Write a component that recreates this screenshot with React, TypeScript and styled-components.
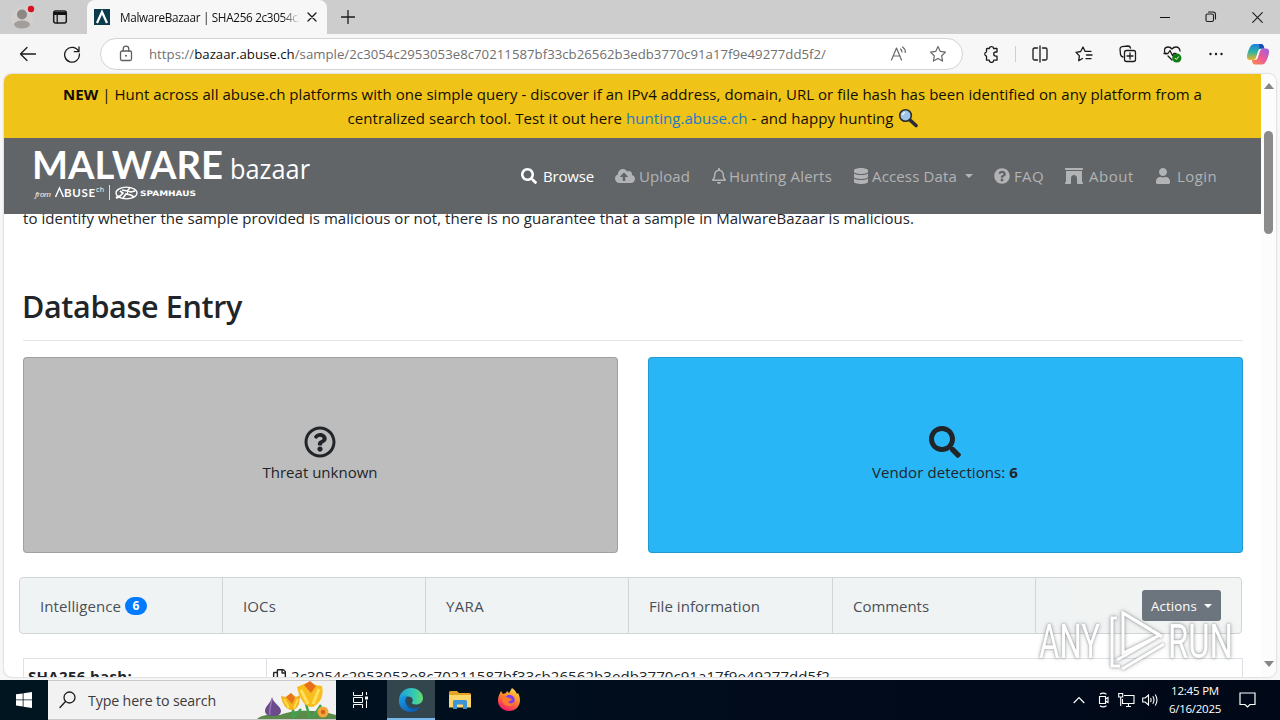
import React, {useLayoutEffect, useRef, useState} from 'react';
import styled, {createGlobalStyle, css} from 'styled-components';
import {
  FaArchway,
  FaCloudUploadAlt,
  FaDatabase,
  FaQuestionCircle,
  FaRegBell,
  FaRegCopy,
  FaRegQuestionCircle,
  FaSearch,
  FaUser,
} from 'react-icons/fa';

const GlobalStyle = createGlobalStyle`
  * {
    box-sizing: border-box;
  }
  body {
    margin: 0;
    overflow: hidden;
    font-family: "Open Sans", "Noto Sans", sans-serif;
    font-size: 15px;
    line-height: 24px;
    color: #212529;
  }
  svg {
    display: block;
    flex: none;
  }
`

const DesktopSC = styled.div`
  width: 1280px;
  height: 720px;
  display: flex;
  flex-direction: column;
  position: relative;
  overflow: hidden;
  background: #f7f7f7;
`

/* text */
const FitTextSC = styled.span`
  display: inline-block;
  white-space: pre;
`
type FitTextType = {
  width: number;
  children: React.ReactNode;
}
// spreads the letters so that the text takes the given width
const FitText = ({width, children}: FitTextType) => {
  const ref = useRef<HTMLSpanElement>(null)
  const [spacing, setSpacing] = useState(0)

  useLayoutEffect(() => {
    const el = ref.current
    if (!el || !el.textContent) return
    const natural = el.getBoundingClientRect().width
    setSpacing((width - natural) / el.textContent.length)
  }, [])

  return <FitTextSC ref={ref} style={{letterSpacing: spacing}}>{children}</FitTextSC>
}

const Spacer = styled.div<{ $width?: number }>`
  ${props => props.$width === undefined ? 'margin-left: auto;' : `margin-left: ${props.$width}px;`}
`

/* tab strip */
const TabStrip = styled.div`
  height: 34px;
  flex: none;
  display: flex;
  background: #cdcdcd;
`
const TabStripLeft = styled.div`
  width: 87px;
  display: flex;
  align-items: center;
  gap: 16px;
  padding-left: 9px;
`
const BrowserTab = styled.div`
  width: 240px;
  display: flex;
  align-items: center;
  padding-left: 7px;
  background: #f7f7f7;
  border-radius: 8px 8px 0 0;
`
const TabTitle = styled.div`
  width: 180px;
  margin: 0 7px 0 10px;
  overflow: hidden;
  font-size: 11.7px;
  line-height: 16px;
  color: #111;
  white-space: nowrap;
  mask-image: linear-gradient(90deg, #000 162px, transparent 180px);
`
const NewTab = styled.div`
  display: flex;
  align-items: center;
  padding-left: 14px;
`
const WindowButtons = styled.div`
  margin-left: auto;
  display: flex;
  align-items: center;
`
const WindowButton = styled.div`
  width: 46px;
  display: flex;
  justify-content: center;
`

/* toolbar */
const Toolbar = styled.div`
  height: 40px;
  flex: none;
  display: flex;
  align-items: center;
  background: #f7f7f7;
`
const NavButtons = styled.div`
  width: 100px;
  display: flex;
  align-items: center;
  gap: 24px;
  padding-left: 18px;
`
const AddressBar = styled.div`
  width: 863px;
  height: 32px;
  display: flex;
  align-items: center;
  padding: 0 15px 0 17px;
  background: #fff;
  border: 1px solid #d3d3d3;
  border-radius: 16px;
`
const Address = styled.div`
  margin-left: 15px;
  font-size: 13.2px;
  line-height: 20px;
  color: #707070;
  b {
    font-weight: 400;
    color: #111;
  }
`
const AddressIcons = styled.div`
  margin-left: auto;
  display: flex;
  align-items: center;
  gap: 21px;
`
const ToolbarIcons = styled.div`
  flex: 1;
  display: flex;
  align-items: center;
  gap: 26px;
  padding-left: 19px;
`
const ToolbarLine = styled.div`
  width: 1px;
  height: 16px;
  margin: 0 -11px 0 -12px;
  background: #cfcfcf;
`
const ToolbarEnd = styled.div`
  display: flex;
  align-items: center;
  gap: 23px;
  margin-left: -1px;
`

/* site */
const Viewport = styled.div`
  height: 603px;
  flex: none;
  margin: 0 4px;
  display: flex;
  overflow: hidden;
  background: #fff;
  border-radius: 8px;
  box-shadow: 0 0 2px rgba(0, 0, 0, 0.3);
`
const Site = styled.div`
  width: 1257px;
  display: flex;
  flex-direction: column;
`
const Banner = styled.div`
  height: 64px;
  flex: none;
  padding-top: 8px;
  display: flex;
  flex-direction: column;
  align-items: center;
  background: #efc318;
  color: #120e05;
  a {
    color: #2079cc;
  }
`
const BannerRow = styled.div`
  height: 24px;
  display: flex;
  align-items: center;
  gap: 4px;
`
const Header = styled.div`
  height: 76px;
  flex: none;
  display: flex;
  justify-content: space-between;
  background: #626568;
`
const Menu = styled.div`
  display: flex;
  align-items: center;
  padding-right: 44px;
  gap: 21px;
`
type MenuItemType = {
  $active?: boolean;
  $gap?: number;
}
const MenuItem = styled.a<MenuItemType>`
  display: flex;
  align-items: center;
  gap: ${props => props.$gap ?? 4}px;
  color: ${props => props.$active ? '#fff' : '#b1b3b5'};
`
const Caret = styled.i<{ $left?: number }>`
  margin-left: ${props => props.$left ?? 4}px;
  border: 4px solid transparent;
  border-top-color: currentColor;
  border-bottom: 0;
`
const Content = styled.div`
  flex: 1;
  padding: 0 18px 0 19px;
  overflow: hidden;
`
const Note = styled.p`
  height: 24px;
  margin: -8px 0 0;
`
const Title = styled.h2`
  height: 38px;
  margin: 57px 0 15px -1px;
  font-weight: 600;
  font-size: 30.5px;
  line-height: 38px;
`
const Line = styled.div`
  height: 1px;
  margin-top: 1px;
  background: #e4e4e4;
`
const Cards = styled.div`
  display: grid;
  grid-template-columns: 1fr 1fr;
  column-gap: 30px;
  margin-top: 16px;
`
const Card = styled.div<{ $color: string }>`
  height: 196px;
  display: flex;
  flex-direction: column;
  align-items: center;
  padding: 68px 1px 0 0;
  background: ${props => props.$color};
  border: 1px solid rgba(0, 0, 0, 0.15);
  border-radius: 4px;
`
const CardText = styled.div`
  margin-top: 2px;
  height: 24px;
`
const Sections = styled.div`
  width: 1223px;
  height: 57px;
  margin: 24px 0 24px -4px;
  display: grid;
  grid-template-columns: 202px 203px 203px 204px 203px 1fr;
  background: linear-gradient(90deg, #f0f3f3 83%, #f3f4f4);
  border: 1px solid #d2d5d6;
  border-radius: 4px;
`
const Section = styled.div`
  display: flex;
  align-items: center;
  gap: 4px;
  padding: 1px 20px 0 20px;
  color: #495057;
  & + & {
    border-left: 1px solid #d2d5d6;
  }
`
const Badge = styled.span`
  width: 22px;
  height: 18px;
  border-radius: 9px;
  background: #007bff;
  color: #fff;
  font-size: 12px;
  font-weight: 700;
  line-height: 18px;
  text-align: center;
`
const ActionsButton = styled.div`
  width: 79px;
  height: 31px;
  margin: -1px 0 0 auto;
  display: flex;
  align-items: center;
  justify-content: center;
  gap: 3px;
  border-radius: 3px;
  background: #6c757d;
  color: #fff;
  font-size: 13.2px;
`
const Table = styled.div`
  display: grid;
  grid-template-columns: 243px 1fr;
  border: 1px solid #dee2e6;
`
const Cell = styled.div<{ $head?: boolean }>`
  height: 34px;
  display: flex;
  align-items: center;
  gap: 4px;
  padding: 0 5px;
  ${props => props.$head && css`
    font-weight: 700;
    border-right: 1px solid #dee2e6;
    padding-left: 4px;
  `}
`
const ScrollBar = styled.div`
  width: 15px;
  display: flex;
  flex-direction: column;
  align-items: center;
  padding: 9px 0 10px;
  background: #fcfcfc;
`
const ScrollArrow = styled.div<{ $down?: boolean }>`
  border: 5px solid transparent;
  ${props => props.$down ? css`
    margin-top: auto;
    border-top: 6px solid #858585;
    border-bottom: 0;
  ` : css`
    border-bottom: 6px solid #858585;
    border-top: 0;
  `}
`
const ScrollThumb = styled.div`
  width: 9px;
  height: 103px;
  margin-top: 42px;
  border-radius: 5px;
  background: #8b8b8b;
`

/* taskbar */
const Taskbar = styled.div`
  height: 40px;
  flex: none;
  margin-top: 3px;
  display: flex;
  background: linear-gradient(90deg, #00151f, #010b1c 60%, #010918);
  color: #fff;
`
const TaskItem = styled.div<{ $active?: boolean }>`
  width: 48px;
  display: flex;
  align-items: center;
  justify-content: center;
  ${props => props.$active && css`
    background: #33454d;
    border-bottom: 2px solid #76b9ed;
    padding-top: 2px;
  `}
`
const SearchBox = styled.div`
  width: 288px;
  display: flex;
  align-items: center;
  background: #f2f2f2;
  border: solid #c9c9c9;
  border-width: 1px 0;
  padding-left: 11px;
  color: #3b3b3b;
  font-size: 14.2px;
`
const SearchText = styled.div`
  margin: 1px 0 0 12px;
`
const Tray = styled.div`
  margin-left: auto;
  display: flex;
  align-items: center;
  gap: 7px;
  padding-right: 24px;
`
const Clock = styled.div`
  width: 54px;
  display: flex;
  flex-direction: column;
  align-items: center;
  margin: 0 10px 0 2px;
  font-size: 11.5px;
  line-height: 18px;
`
const Watermark = styled.svg`
  position: absolute;
  left: 1032px;
  top: 600px;
  filter: drop-shadow(0 0 1px rgba(90, 95, 100, 0.5)) drop-shadow(0 0 2px rgba(90, 95, 100, 0.4));
`

const stroke = {fill: 'none', stroke: '#1b1b1b', strokeWidth: 1.3, strokeLinecap: 'round', strokeLinejoin: 'round'} as const

const starPath = 'M9 1.5l2.3 4.9 5.2.7-3.8 3.7.9 5.3L9 13.5l-4.6 2.6.9-5.3L1.5 7.1l5.2-.7z'

const Logo = () => (
  <svg width="330" height="76" viewBox="0 0 330 76" fill="#fff">
    <text x="28" y="41" fontFamily="Lato" fontWeight="700" fontSize="38" textLength="191" lengthAdjust="spacingAndGlyphs">MALWARE</text>
    <text x="226" y="41" fontFamily="Open Sans" fontSize="27" textLength="80" lengthAdjust="spacingAndGlyphs">bazaar</text>
    <text x="31" y="59" fontFamily="Open Sans" fontStyle="italic" fontSize="8" textLength="16">from</text>
    <path d="M51.500 59l4-9 4 9" fill="none" stroke="#fff" strokeWidth="1.500"/>
    <text x="60" y="59" fontFamily="Lato" fontWeight="700" fontSize="11.500" textLength="31">BUSE</text>
    <text x="92" y="54" fontFamily="Open Sans" fontSize="7" textLength="8">ch</text>
    <path d="M105.500 47v15" stroke="#dcdddd"/>
    <g fill="none" stroke="#fff">
      <ellipse cx="122.500" cy="55" rx="10.500" ry="5.800" strokeWidth="1.300"/>
      <path d="M115 59l4-4-3-2M119 60l3-4 5 1 3 2M118 52l5 1 3-3M123 53l4 1 4-1" strokeWidth="1.600"/>
      <path d="M123 55h1M112 60l4-2" strokeWidth="2.500"/>
    </g>
    <text x="136" y="58" fontFamily="DejaVu Sans" fontWeight="700" fontSize="7.500" textLength="56" lengthAdjust="spacingAndGlyphs">SPAMHAUS</text>
  </svg>
)

const Crocus = () => (
  <svg width="80" height="38" viewBox="0 0 80 38">
    <path d="M1 38c6-5 16-5 23-4 12-5 35-6 56 0v4z" fill="#5b8a4a"/>
    <path d="M37 37V26M54 37l-4-14M57 36l8-12M38 36l7-8" stroke="#3fa34d" strokeWidth="2.500" fill="none"/>
    <path d="M16 16c1 6 9 9 9 14 0 4-4 5-8 5-5 0-8-2-8-5 0-5 6-8 7-14z" fill="#6b4a8e"/>
    <path d="M16 18c-1 6-3 10-2 16" stroke="#9678b4" strokeWidth="1.500" fill="none"/>
    <path d="M25 15l5 1 5-4 5 4 4-2c0 9-2 14-8 15-6 0-10-7-11-14z" fill="#f6b21b"/>
    <path d="M30 16l5-4 4 5-3 6z" fill="#e8731d"/>
    <path d="M28 18l5 9M42 18l-4 9" stroke="#ffda48" strokeWidth="2.200"/>
    <path d="M41 6l7-3 5-2 6 3 7 1c2 9-1 17-9 21-8 1-14-9-16-20z" fill="#f9bd1d"/>
    <path d="M48 4l6-4 6 5-5 7z" fill="#e8701b"/>
    <path d="M45 9l7 14M63 8l-6 15" stroke="#ffe05a" strokeWidth="3"/>
    <circle cx="67" cy="31" r="5.500" fill="#f4a63a"/>
    <circle cx="67" cy="31" r="2.200" fill="#d2601a"/>
  </svg>
)

const EdgeIcon = () => (
  <svg width="26" height="26" viewBox="0 0 26 26">
    <defs>
      <linearGradient id="edgeTop" x1="0" x2="1"><stop stopColor="#1b9de0"/><stop offset=".6" stopColor="#35c8b5"/><stop offset="1" stopColor="#64dc6a"/></linearGradient>
      <linearGradient id="edgeLow" x1="0" x2="1" y2="1"><stop stopColor="#1ca0e8"/><stop offset="1" stopColor="#0b4fa4"/></linearGradient>
    </defs>
    <path d="M1 12C2 5 7 1 13 1c7 0 12 5 12 10 0 4-3 6.500-7 6.500-3 0-4.500-1-4-2 2-3 0-6-4-6-4 0-7 1-9 2.500z" fill="url(#edgeTop)"/>
    <path d="M1 12c2-3 6-4 9-3-3 2-3 5-2 8 2 5 8 6 14 3-2 3-5 5-9 5C5 25 0 19 1 12z" fill="url(#edgeLow)"/>
    <path d="M10 9.500c-3 3-2 8 2 10.500 3 2 7 2 11-1-6 6-14 4-15-3-.5-3 0-5 2-6.500z" fill="#0d5bb0"/>
  </svg>
)

const FolderIcon = () => (
  <svg width="22" height="20" viewBox="0 0 22 20">
    <path d="M0 2.500Q0 1 1.500 1H8l2 2h10.500Q22 3 22 4.500V17H0z" fill="#e5a324"/>
    <path d="M0 5h22v12.500H0z" fill="#fbd76b"/>
    <path d="M4 19v-7.500Q4 10 5.500 10h11q1.500 0 1.500 1.500V19h-4v-4.500H8V19z" fill="#3f94d4"/>
  </svg>
)

const FirefoxIcon = () => (
  <svg width="24" height="24" viewBox="0 0 24 24">
    <defs>
      <linearGradient id="fox" x1=".8" y1="0" x2=".3" y2="1"><stop stopColor="#ffe04a"/><stop offset=".45" stopColor="#ff8a2b"/><stop offset="1" stopColor="#f5156c"/></linearGradient>
    </defs>
    <path d="M3 5l1-2 2 3 3-1 1-2 2 2 3-5c3 2 4 4 5 6l1-1c5 9 0 18-9 18C5 23 .5 17 1 12c0-3 1-5 2-7z" fill="url(#fox)"/>
    <circle cx="12.500" cy="12" r="5.200" fill="#7b3ff0"/>
    <path d="M5 9c3-1 5 0 7 1l3 1c-1 2-3 2-4 3 2 2 5 2 7-1-1 5-7 7-11 3-2-2-2-5-2-7z" fill="#ff7a2c"/>
  </svg>
)

const CopilotIcon = () => (
  <svg width="22" height="21" viewBox="0 0 22 21">
    <defs>
      <linearGradient id="cpA" x1="0" y1="0" x2="0" y2="1"><stop stopColor="#1f7fe0"/><stop offset=".5" stopColor="#2fb3a0"/><stop offset="1" stopColor="#f0b429"/></linearGradient>
      <linearGradient id="cpB" x1="1" y1="0" x2="0" y2="1"><stop stopColor="#9a5fe8"/><stop offset=".5" stopColor="#ec5a97"/><stop offset="1" stopColor="#fb8b48"/></linearGradient>
    </defs>
    <path d="M7 0h7q2 0 2.600 2l.8 2.500H14q-2 0-2.700 2L9 13.500q-.7 2.500-3 2.500H3q-3 0-3-3 0-4 3-10Q4.500 0 7 0z" fill="url(#cpA)"/>
    <path d="M15 20.500H8q-2 0-2.600-2L5 16h3q2 0 2.700-2L13 7q.7-2.500 3-2.500h3q3 0 3 3 0 4-3 10-1.500 3-4 3z" fill="url(#cpB)"/>
    <path d="M12 0h2q2 0 2.600 2l.8 2.500H14l-1.500.5z" fill="#1c49b8"/>
  </svg>
)

const menuItems = [
  {id: 1, name: 'Browse', width: 51, icon: <FaSearch size={16}/>, gap: 6, active: true},
  {id: 2, name: 'Upload', width: 51, icon: <FaCloudUploadAlt size={20}/>, gap: 4},
  {id: 3, name: 'Hunting Alerts', width: 103, icon: <FaRegBell size={16}/>, gap: 2},
  {id: 4, name: 'Access Data', width: 85, icon: <FaDatabase size={16}/>, gap: 3, caret: true},
  {id: 5, name: 'FAQ', width: 30, icon: <FaQuestionCircle size={16}/>, gap: 4},
  {id: 6, name: 'About', width: 45, icon: <FaArchway size={18}/>, gap: 6},
  {id: 7, name: 'Login', width: 40, icon: <FaUser size={16}/>, gap: 6},
]

const App = () => {
  return (
    <>
      <GlobalStyle/>
      <DesktopSC>
        <TabStrip>
          <TabStripLeft>
            <svg width="27" height="26" viewBox="0 0 27 26">
              <circle cx="13" cy="14" r="11" fill="#d3d0ce"/>
              <circle cx="13" cy="10.500" r="5" fill="#8b8886"/>
              <ellipse cx="13" cy="20.500" rx="8" ry="4" fill="#a19e9b"/>
              <circle cx="22" cy="5" r="3.200" fill="#d9101f"/>
            </svg>
            <svg width="16" height="16" viewBox="0 0 16 16">
              <rect x="1.700" y="2" width="12.600" height="12" rx="2" {...stroke} strokeWidth="1.500"/>
              <path d="M2 3h12v3H2z" fill="#111"/>
              <path d="M5.200 5v9" {...stroke}/>
            </svg>
          </TabStripLeft>
          <BrowserTab>
            <svg width="16" height="16" viewBox="0 0 16 16">
              <path d="M0 0h16v16H0z" fill="#0b3c4b"/>
              <path d="M3 14L8 3l5 11" fill="none" stroke="#fff" strokeWidth="2.200"/>
            </svg>
            <TabTitle><FitText width={184}>MalwareBazaar | SHA256 2c3054c2</FitText></TabTitle>
            <svg width="10" height="10" viewBox="0 0 10 10"><path d="M1 1l8 8M9 1l-8 8" {...stroke}/></svg>
          </BrowserTab>
          <NewTab>
            <svg width="14" height="14" viewBox="0 0 14 14"><path d="M7 .5v13M.5 7h13" {...stroke}/></svg>
          </NewTab>
          <WindowButtons>
            <WindowButton><svg width="10" height="10"><path d="M0 5.500h10" stroke="#111"/></svg></WindowButton>
            <WindowButton>
              <svg width="12" height="12" viewBox="0 0 12 12">
                <path d="M1 4.500Q1 3 2.500 3H7q1.500 0 1.500 1.500V9q0 1.500-1.500 1.500H2.500Q1 10.500 1 9zM3.500 1H8q2.500 0 2.500 2.500V8" {...stroke} strokeWidth="1.100"/>
              </svg>
            </WindowButton>
            <WindowButton><svg width="11" height="11" viewBox="0 0 11 11"><path d="M.7.7l9.600 9.600M10.300.7L.7 10.300" {...stroke} strokeWidth="1.100"/></svg></WindowButton>
          </WindowButtons>
        </TabStrip>

        <Toolbar>
          <NavButtons>
            <svg width="20" height="18" viewBox="0 0 20 18"><path d="M17.500 9H2.500M9 2.500L2.500 9 9 15.500" {...stroke}/></svg>
            <svg width="20" height="18" viewBox="0 0 20 18"><path d="M16.700 6.500A7.400 7.400 0 1 0 17.400 9M17 2v4.700h-4.700" {...stroke}/></svg>
          </NavButtons>
          <AddressBar>
            <svg width="16" height="18" viewBox="0 0 16 18">
              <rect x="2.500" y="6" width="11" height="9.500" rx="1.500" {...stroke} stroke="#5f5f5f"/>
              <path d="M5.200 6V4a2.800 2.800 0 0 1 5.600 0v2" {...stroke} stroke="#5f5f5f"/>
              <circle cx="8" cy="10.800" r="1" fill="#5f5f5f"/>
            </svg>
            <Address>
              <FitText width={677}>https://<b>bazaar.abuse.ch</b>/sample/2c3054c2953053e8c70211587bf33cb26562b3edb3770c91a17f9e49277dd5f2/</FitText>
            </Address>
            <AddressIcons>
              <svg width="18" height="18" viewBox="0 0 18 18">
                <path d="M1.500 15L6.500 3l5 12M3.300 11h6.400M10.500 4q1.500 1.200 1.500 3M12.500 2q3 2 2.800 5.500" {...stroke} stroke="#686868" strokeWidth="1.200"/>
              </svg>
              <svg width="18" height="18" viewBox="0 0 18 18"><path d={starPath} {...stroke} stroke="#686868" strokeWidth="1.200"/></svg>
            </AddressIcons>
          </AddressBar>
          <ToolbarIcons>
            <svg width="19" height="18" viewBox="0 0 19 18">
              <path d="M5 3.500h2.200a2.300 2.300 0 0 1 4.500 0H15V7h-1.200a2 2 0 0 0 0 4.200H15v4H11.700a2.200 2.200 0 0 1-4.400 0H4.500v-4a2.200 2.200 0 0 1 0-4.300V4z" {...stroke}/>
            </svg>
            <ToolbarLine/>
            <svg width="18" height="18" viewBox="0 0 18 18">
              <path d="M6.500 3h-3Q2 3 2 4.500v9Q2 15 3.500 15h3M11.500 3h3Q16 3 16 4.500v9q0 1.500-1.500 1.500h-3M9 1v16" {...stroke}/>
            </svg>
            <svg width="18" height="18" viewBox="0 0 18 18">
              <path d="M7.500 13.500L3.700 15.700l.7-4.800L1 7.300l4.700-.8L8 2l2 4.300h6M11.500 10H17M11 13.700h5" {...stroke}/>
            </svg>
            <svg width="18" height="18" viewBox="0 0 18 18">
              <path d="M4 12Q2 11.500 1.500 9.500L1 4Q1 2 3 1.700l6-.7q2 0 2.500 2" {...stroke}/>
              <rect x="5.500" y="5.500" width="11" height="11" rx="2" {...stroke}/>
              <path d="M11 8v6M8 11h6" {...stroke}/>
            </svg>
            <svg width="20" height="18" viewBox="0 0 20 18">
              <path d="M3 9C0 6 1.500 2 5 2q2.500 0 4 2 1.500-2 4-2 3.500 0 4 4M9 15l-4-4M1 8.500h4l2-3 2.500 5 1.500-2h2" {...stroke}/>
              <circle cx="13.800" cy="13" r="4.600" fill="#107c10"/>
              <path d="M11.800 13l1.500 1.500 2.500-3" stroke="#fff" fill="none"/>
            </svg>
            <ToolbarEnd>
              <svg width="16" height="4" viewBox="0 0 16 4" fill="#1b1b1b"><circle cx="2.500" cy="2" r="1.200"/><circle cx="8" cy="2" r="1.200"/><circle cx="13.500" cy="2" r="1.200"/></svg>
              <CopilotIcon/>
            </ToolbarEnd>
          </ToolbarIcons>
        </Toolbar>

        <Viewport>
          <Site>
            <Banner>
              <BannerRow>
                <FitText width={1139}><b>NEW</b> | Hunt across all abuse.ch platforms with one simple query - discover if an IPv4 address, domain, URL or file hash has been identified on any platform from a</FitText>
              </BannerRow>
              <BannerRow>
                <FitText width={546}>centralized search tool. Test it out here <a>hunting.abuse.ch</a> - and happy hunting</FitText>
                <svg width="20" height="20" viewBox="0 0 20 20">
                  <path d="M12.500 12.500l5.500 5" stroke="#2b2b33" strokeWidth="3.600" strokeLinecap="round"/>
                  <circle cx="7.500" cy="7.500" r="5.800" fill="#9cc6ea" stroke="#2b2b33" strokeWidth="1.600"/>
                  <path d="M4.500 7q.5-2 2.500-2.700" stroke="#fff" strokeWidth="1.300" fill="none"/>
                </svg>
              </BannerRow>
            </Banner>
            <Header>
              <Logo/>
              <Menu>
                {menuItems.map((item) => (
                  <MenuItem key={item.id} $active={item.active} $gap={item.gap}>
                    {item.icon}
                    <FitText width={item.width}>{item.name}</FitText>
                    {item.caret && <Caret $left={5}/>}
                  </MenuItem>
                ))}
              </Menu>
            </Header>
            <Content>
              <Note><FitText width={891}>to identify whether the sample provided is malicious or not, there is no guarantee that a sample in MalwareBazaar is malicious.</FitText></Note>
              <Title><FitText width={220}>Database Entry</FitText></Title>
              <Line/>
              <Cards>
                <Card $color="#bdbdbd">
                  <FaRegQuestionCircle size={32}/>
                  <CardText><FitText width={115}>Threat unknown</FitText></CardText>
                </Card>
                <Card $color="#29b6f6">
                  <FaSearch size={32}/>
                  <CardText><FitText width={146}>Vendor detections: <b>6</b></FitText></CardText>
                </Card>
              </Cards>
              <Sections>
                <Section><FitText width={81}>Intelligence</FitText><Badge>6</Badge></Section>
                <Section><FitText width={33}>IOCs</FitText></Section>
                <Section><FitText width={38}>YARA</FitText></Section>
                <Section><FitText width={111}>File information</FitText></Section>
                <Section><FitText width={76}>Comments</FitText></Section>
                <Section><ActionsButton><FitText width={46}>Actions</FitText><Caret/></ActionsButton></Section>
              </Sections>
              <Table>
                <Cell $head><FitText width={104}>SHA256 hash:</FitText></Cell>
                <Cell><FaRegCopy size={15}/><FitText width={539}>2c3054c2953053e8c70211587bf33cb26562b3edb3770c91a17f9e49277dd5f2</FitText></Cell>
              </Table>
            </Content>
          </Site>
          <ScrollBar>
            <ScrollArrow/>
            <ScrollThumb/>
            <ScrollArrow $down/>
          </ScrollBar>
        </Viewport>

        <Taskbar>
          <TaskItem>
            <svg width="16" height="16" viewBox="0 0 16 16" fill="#fff"><path d="M0 2.300L6.700 1.400v6.100H0zM7.500 1.300L16 0v7.500H7.500zM0 8.300h6.700v6.200L0 13.600zM7.500 8.300H16V16l-8.500-1.300z"/></svg>
          </TaskItem>
          <SearchBox>
            <svg width="17" height="18" viewBox="0 0 17 18"><circle cx="10.500" cy="6.500" r="5.500" {...stroke}/><path d="M6.500 10.500L1 16.500" {...stroke}/></svg>
            <SearchText><FitText width={128}>Type here to search</FitText></SearchText>
            <Spacer/>
            <Crocus/>
          </SearchBox>
          <TaskItem>
            <svg width="17" height="16" viewBox="0 0 17 16" fill="none" stroke="#fff">
              <path d="M1.500 0v3.500h9V0M1.500 16v-3.500h9V16M1.500 5.500h9v5h-9zM14.500 0v3M14.500 8.500V16"/>
              <path d="M13 4.500h3v3h-3z" fill="#fff" stroke="none"/>
            </svg>
          </TaskItem>
          <Spacer $width={3}/>
          <TaskItem $active><EdgeIcon/></TaskItem>
          <Spacer $width={1}/>
          <TaskItem><FolderIcon/></TaskItem>
          <Spacer $width={1}/>
          <TaskItem><FirefoxIcon/></TaskItem>
          <Tray>
            <svg width="12" height="8" viewBox="0 0 12 8"><path d="M.7 7L6 1.500 11.300 7" fill="none" stroke="#fff" strokeWidth="1.200"/></svg>
            <Spacer $width={-2}/>
            <svg width="14" height="16" viewBox="0 0 14 16" fill="none" stroke="#fff" strokeWidth="1.100">
              <path d="M2.500 4.500h6v7h-6zM8.500 7L11 5.500v5L8.500 9M3 2.200q3-2.200 6.500 0M3 13.800q3 2.200 6.500 0"/>
            </svg>
            <svg width="17" height="16" viewBox="0 0 17 16" fill="none" stroke="#fff" strokeWidth="1.100">
              <path d="M6 3.500h10v8H4.500V7M.7 1.500h4v3.500h-4zM2.700 5v9M8 14.500h5M10.500 11.500v3"/>
            </svg>
            <svg width="17" height="14" viewBox="0 0 17 14" fill="none" stroke="#fff" strokeWidth="1.100">
              <path d="M.7 5h2.500L6.500 2v10L3.200 9H.7zM8.500 5q1.200 2 0 4M10.800 3.200q2.400 3.800 0 7.600M13.200 1.500q3.600 5.500 0 11"/>
            </svg>
            <Clock>
              <FitText width={48}>12:45 PM</FitText>
              <FitText width={52}>6/16/2025</FitText>
            </Clock>
            <svg width="17" height="16" viewBox="0 0 17 16" fill="none" stroke="#fff" strokeWidth="1.200"><path d="M1 1h15v11.500h-5L8.500 15 6 12.500H1z"/></svg>
          </Tray>
        </Taskbar>

        <Watermark width="210" height="80" viewBox="0 0 210 80">
          <g fill="#fff" fontFamily="Roboto" fontSize="48">
            <text x="7" y="58" textLength="61" lengthAdjust="spacingAndGlyphs">ANY</text>
            <text x="136" y="58" textLength="65" lengthAdjust="spacingAndGlyphs">RUN</text>
          </g>
          <g fill="none" stroke="#fff" strokeWidth="3">
            <path d="M91 13v40l37-18z"/>
            <path d="M91 13l39 24"/>
            <path d="M85 18h-5v48l8 0M90 69l42-25M85 60l38-22"/>
          </g>
        </Watermark>
      </DesktopSC>
    </>
  );
};

export default App;
